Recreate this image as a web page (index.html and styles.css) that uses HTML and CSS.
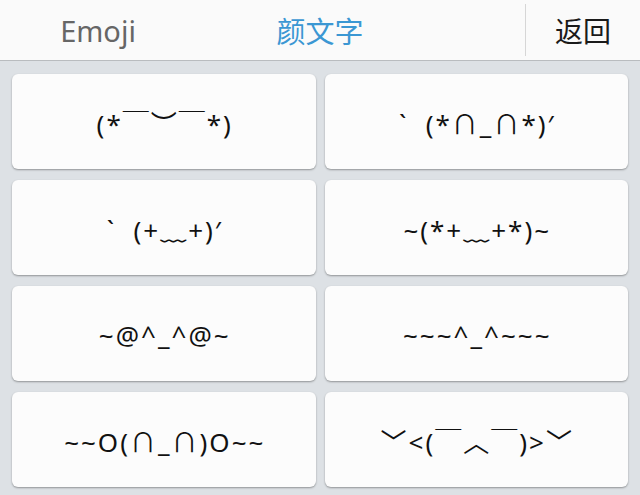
FILE: index.html
```html
<!DOCTYPE html>
<html lang="zh-CN">
<head>
    <meta charset="UTF-8">
    <meta name="viewport" content="width=device-width, initial-scale=1.0">
    <title>颜文字</title>
    <link rel="stylesheet" href="styles.css">
</head>
<body>
    <div class="panel">
        <div class="tab-bar">
            <div class="tab">Emoji</div>
            <div class="tab tab-active">颜文字</div>
            <div class="tab-spacer"></div>
            <div class="back-btn">返回</div>
        </div>

        <div class="kaomoji-grid">
            <div class="kaomoji-card">(*￣︶￣*)</div>
            <div class="kaomoji-card">`&nbsp;&nbsp;(*∩_∩*)′</div>
            <div class="kaomoji-card">`&nbsp;&nbsp;(+﹏+)′</div>
            <div class="kaomoji-card">~(*+﹏+*)~</div>
            <div class="kaomoji-card">~@^_^@~</div>
            <div class="kaomoji-card">~~~^_^~~~</div>
            <div class="kaomoji-card">~~O(∩_∩)O~~</div>
            <div class="kaomoji-card">﹀&lt;(￣︿￣)&gt;﹀</div>
        </div>
    </div>
</body>
</html>
```

FILE: styles.css
```css
:root {
    --accent-color: #3b97d3;
    --panel-bg: #dde1e5;
    --bar-bg: #fafafa;
}

body {
    margin: 0;
    font-family: 'Noto Sans', 'Noto Sans CJK SC', sans-serif;
    background: var(--panel-bg);
    color: #111;
}

.panel {
    width: 640px;
    height: 495px;
    overflow: hidden;
}

.tab-bar {
    display: grid;
    grid-template-columns: 196px 248px 1fr 115px;
    height: 60px;
    background: var(--bar-bg);
    border-bottom: 1px solid #b9bcbf;
}

.tab {
    display: flex;
    align-items: center;
    justify-content: center;
    font-size: 29px;
    color: #666;
}

.tab-active {
    color: var(--accent-color);
}

.back-btn {
    display: flex;
    align-items: center;
    justify-content: center;
    margin: 4px 0;
    border-left: 1px solid #d6d6d6;
    font-size: 28px;
    color: #1a1a1a;
}

.kaomoji-grid {
    display: grid;
    grid-template-columns: 1fr 1fr;
    grid-auto-rows: 95px;
    column-gap: 9px;
    row-gap: 11px;
    padding: 13px 12px;
}

.kaomoji-card {
    display: flex;
    align-items: center;
    justify-content: center;
    padding: 3px 0 0 2px;
    box-sizing: border-box;
    background: #fcfcfc;
    border-radius: 6px;
    box-shadow: 0 1px 2px rgba(0, 0, 0, 0.35);
    font-size: 26px;
    letter-spacing: 2px;
    white-space: pre;
}
```
